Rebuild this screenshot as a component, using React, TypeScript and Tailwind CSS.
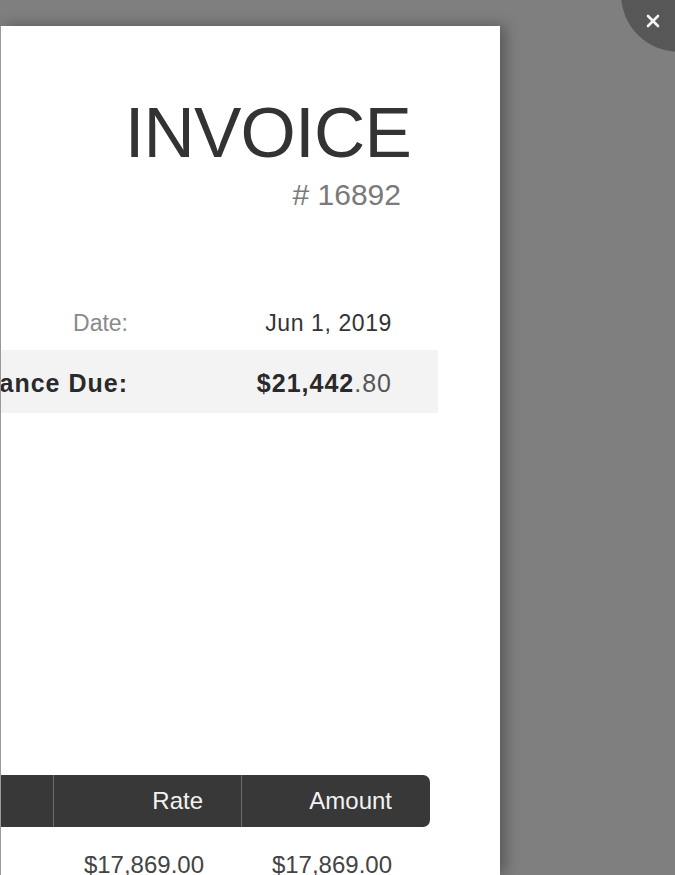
export default function App() {
  return (
    <div className="relative h-[875px] w-[675px] overflow-hidden bg-[#7f7f7f] pt-[26px] font-['Liberation_Sans',Arial,sans-serif]">
      <div className="flex h-[849px] w-[500px] flex-col overflow-hidden border-l border-[#9a9a9a] bg-white shadow-[5px_0_14px_rgba(0,0,0,0.32)]">
        {/* heading */}
        <div className="flex flex-col items-end pr-[89px] pt-[71px]">
          <h1 className="text-[71px] leading-none font-normal tracking-[-0.8px] text-[#333]">INVOICE</h1>
          <div className="mt-[12px] mr-[10px] text-[30px] leading-none text-[#7a7a7a]">
            # 16892
          </div>
        </div>

        {/* meta */}
        <div className="mt-[91px] flex flex-col">
          <div className="flex h-[49px] items-start pt-[5px] pr-[108px] text-[23px]">
            <div className="flex min-w-0 flex-1 justify-end whitespace-nowrap text-[#8a8a8a]">Date:</div>
            <div className="w-[264px] text-right tracking-[0.6px] text-[#333]">Jun 1, 2019</div>
          </div>
          <div className="mr-[62px] flex h-[63px] items-start bg-[#f3f3f3] pt-[15px] pr-[46px] text-[25px]">
            <div className="flex min-w-0 flex-1 justify-end whitespace-nowrap font-bold tracking-[1px] text-[#2a2a2a]">
              Balance Due:
            </div>
            <div className="w-[264px] text-right tracking-[1px] text-[#2a2a2a]">
              <span className="font-bold">$21,442</span>
              <span className="text-[#555]">.80</span>
            </div>
          </div>
        </div>

        {/* items */}
        <div className="mt-auto mr-[70px] flex flex-col">
          <div className="flex h-[52px] items-stretch rounded-r-[7px] bg-[#383838] text-[24px] text-[#f2f2f2]">
            <div className="w-[53px] border-r border-[#6a6a6a]" />
            <div className="flex w-[188px] items-center justify-end border-r border-[#6a6a6a] pr-[38px]">
              Rate
            </div>
            <div className="flex flex-1 items-center justify-end pr-[38px]">Amount</div>
          </div>
          <div className="flex h-[48px] items-start pt-[20px] text-[24px] text-[#444]">
            <div className="w-[53px]" />
            <div className="w-[188px] pr-[38px] text-right">$17,869.00</div>
            <div className="flex-1 pr-[38px] text-right">$17,869.00</div>
          </div>
        </div>
      </div>

      <button className="absolute right-[-62px] top-[-64px] h-[116px] w-[116px] rounded-full bg-[#575757]">
        <svg
          className="absolute left-[25px] top-[78px]"
          width="14"
          height="14"
          viewBox="0 0 14 14"
          fill="none"
          stroke="#f4f4f4"
          strokeWidth="2.6"
          strokeLinecap="round"
        >
          <path d="M2 2L12 12M12 2L2 12" />
        </svg>
      </button>
    </div>
  );
}
